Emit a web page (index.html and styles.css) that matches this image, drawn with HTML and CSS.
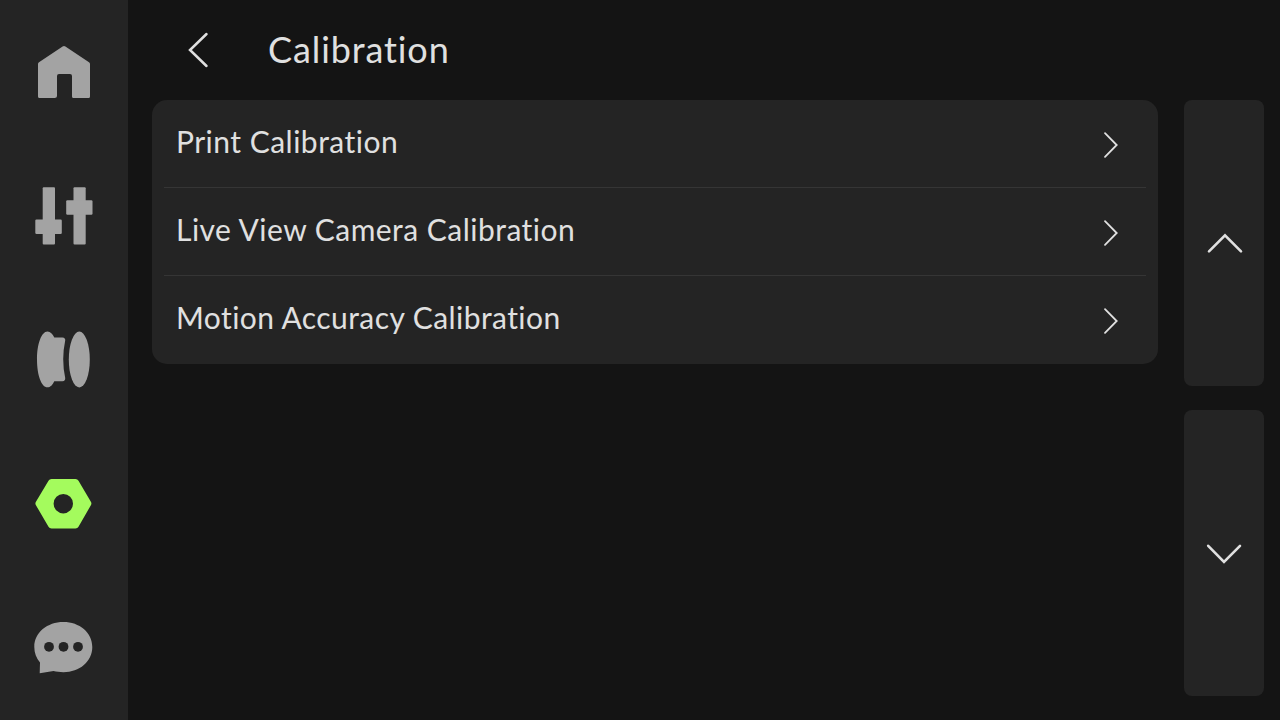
FILE: index.html
```html
<!DOCTYPE html>
<html lang="en">
<head>
    <meta charset="UTF-8">
    <meta name="viewport" content="width=device-width, initial-scale=1.0">
    <title>Calibration</title>
    <link rel="stylesheet" href="styles.css">
</head>
<body>

    <nav class="sidebar">
        <!-- Home -->
        <a class="nav-item">
            <svg viewBox="0 0 80 76">
                <path d="M15 28.2L38.6 12.4Q40 11.4 41.4 12.4L65 28.2Q66 28.9 66 30V62.5Q66 64 64.5 64H49.5Q48 64 48 62.5V42Q48 40 46 40H35Q33 40 33 42V61.5Q33 64 30.5 64H15.5Q14 64 14 62.5V30Q14 28.9 15 28.2Z"/>
            </svg>
        </a>
        <!-- Controls -->
        <a class="nav-item">
            <svg viewBox="0 0 80 76">
                <rect x="18.7" y="9.3" width="12.3" height="57.2" rx="1"/>
                <rect x="11.3" y="41.5" width="26.5" height="14.5" rx="1.2"/>
                <rect x="49.5" y="9.3" width="12.2" height="57.2" rx="1"/>
                <rect x="42.2" y="22.2" width="26.3" height="14.6" rx="1.2"/>
            </svg>
        </a>
        <!-- Filament -->
        <a class="nav-item">
            <svg viewBox="0 0 80 76">
                <ellipse cx="55.3" cy="37.5" rx="10.5" ry="28"/>
                <path d="M23.5 9.5C26.5 9.5 28.5 12 30.3 15.4H38.5Q41.5 15.6 41.2 18.5Q37.2 37.3 41.2 56Q41.5 59 38.5 59.2H30.3C28.5 62.8 26.5 65.3 23.5 65.3C17.5 65.3 13 53 13 37.4C13 22 17.5 9.5 23.5 9.5Z"/>
            </svg>
        </a>
        <!-- Settings -->
        <a class="nav-item active">
            <svg viewBox="0 0 80 76">
                <path fill-rule="evenodd" d="M27.5 13H51.5Q53.5 13 54.5 14.8L67 36Q67.8 37.5 67 39L54.5 60.7Q53.5 62.5 51.5 62.5H27.5Q25.5 62.5 24.5 60.7L11.8 39Q11 37.5 11.8 36L24.5 14.8Q25.5 13 27.5 13ZM39.3 28A9.7 9.7 0 1 0 39.3 47.4A9.7 9.7 0 1 0 39.3 28Z"/>
            </svg>
        </a>
        <!-- Assistant -->
        <a class="nav-item">
            <svg viewBox="0 0 80 76">
                <path d="M39.4 12C55.5 12 68.3 22.5 68.3 37C68.3 51.5 55.5 62.2 39.4 62.2C35.8 62.2 32.5 61.6 29.5 61L15.7 63.3L16 52.5C12.2 48 10.3 43 10.3 37C10.3 22.5 23.3 12 39.4 12Z"/>
                <g class="dots">
                    <circle cx="25" cy="36.8" r="4.9"/>
                    <circle cx="39.5" cy="36.8" r="4.9"/>
                    <circle cx="54" cy="36.8" r="4.9"/>
                </g>
            </svg>
        </a>
    </nav>

    <main class="page">
        <header class="header">
            <svg class="back" viewBox="0 0 24 40"><path d="M20.5 4L4 20L20.5 36"/></svg>
            <h1>Calibration</h1>
        </header>

        <div class="content">
            <ul class="menu">
                <li>
                    <span class="print">Print Calibration</span>
                    <svg class="arrow" viewBox="0 0 18 30"><path d="M3 3.2L14.7 15L3 26.8"/></svg>
                </li>
                <li>
                    <span class="camera">Live View Camera Calibration</span>
                    <svg class="arrow" viewBox="0 0 18 30"><path d="M3 3.2L14.7 15L3 26.8"/></svg>
                </li>
                <li>
                    <span class="motion">Motion Accuracy Calibration</span>
                    <svg class="arrow" viewBox="0 0 18 30"><path d="M3 3.2L14.7 15L3 26.8"/></svg>
                </li>
            </ul>

            <div class="scroll">
                <button class="scroll-btn" aria-label="Scroll up">
                    <svg viewBox="0 0 40 24"><path d="M5 20.3L21 4.3L37 20.3"/></svg>
                </button>
                <button class="scroll-btn" aria-label="Scroll down">
                    <svg viewBox="0 0 40 24"><path d="M4.2 4.8L20 21L36 4.8"/></svg>
                </button>
            </div>
        </div>
    </main>

</body>
</html>
```

FILE: styles.css
```css
* {
    box-sizing: border-box;
}
body {
    margin: 0;
    height: 720px;
    display: flex;
    overflow: hidden;
    background: #141414;
    color: #e0e0e0;
    font-family: Lato, "Noto Sans", sans-serif;
}
svg {
    display: block;
}

/* Sidebar */
.sidebar {
    width: 128px;
    display: flex;
    flex-direction: column;
    background: #242424;
}
.nav-item {
    height: 144px;
    display: flex;
    align-items: center;
    justify-content: center;
}
.nav-item svg {
    width: 80px;
    height: 76px;
    fill: #a3a3a3;
}
.nav-item.active svg {
    fill: #a4fb5d;
}
.nav-item .dots {
    fill: #242424;
}

/* Header */
.page {
    flex: 1;
    display: flex;
    flex-direction: column;
    padding: 0 16px 24px 24px;
}
.header {
    height: 100px;
    display: flex;
    align-items: center;
    padding-left: 34px;
}
.back {
    width: 24px;
    height: 40px;
    margin-right: 58px;
    fill: none;
    stroke: #e0e0e0;
    stroke-width: 2.5;
    stroke-linecap: round;
}
h1 {
    margin: 0 0 3px;
    font-size: 36px;
    font-weight: 400;
    line-height: 48px;
    letter-spacing: 0.9px;
}

/* Menu list */
.content {
    flex: 1;
    display: flex;
    align-items: flex-start;
    gap: 26px;
}
.menu {
    flex: 1;
    margin: 0;
    padding: 0 12px;
    list-style: none;
    background: #242424;
    border-radius: 15px;
}
.menu li {
    height: 88px;
    display: flex;
    align-items: center;
    justify-content: space-between;
    padding: 2px 26px 0 12px;
    border-bottom: 1px solid #353535;
}
.menu li:last-child {
    border-bottom-color: transparent;
}
.menu span {
    font-size: 30px;
    line-height: 40px;
    margin-bottom: 7px;
    white-space: nowrap;
}
.print {
    letter-spacing: 0.48px;
}
.camera {
    letter-spacing: 0.48px;
}
.motion {
    letter-spacing: 0.43px;
}
.arrow {
    width: 18px;
    height: 30px;
    fill: none;
    stroke: #e0e0e0;
    stroke-width: 1.8;
    stroke-linecap: round;
}

/* Scroll buttons */
.scroll {
    width: 80px;
    height: 596px;
    display: flex;
    flex-direction: column;
    gap: 24px;
}
.scroll-btn {
    flex: 1;
    display: flex;
    align-items: center;
    justify-content: center;
    padding: 0;
    border: none;
    border-radius: 8px;
    background: #242424;
}
.scroll-btn svg {
    width: 40px;
    height: 24px;
    fill: none;
    stroke: #e0e0e0;
    stroke-width: 2.6;
    stroke-linecap: round;
}
```
